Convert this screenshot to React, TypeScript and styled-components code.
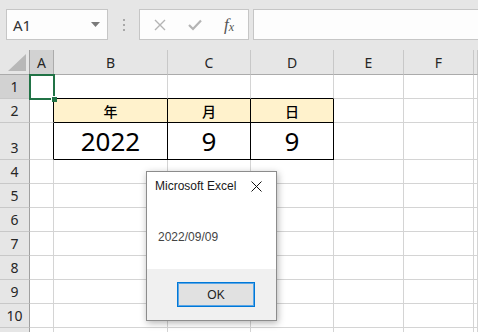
import styled, { createGlobalStyle } from 'styled-components'

const GlobalStyle = createGlobalStyle`
  html, body {
    margin: 0;
    padding: 0;
    overflow: hidden;
    background: #ffffff;
  }
  body {
    font-family: 'Noto Sans', 'Noto Sans CJK JP', sans-serif;
  }
`

const columns = ['A', 'B', 'C', 'D', 'E', 'F', 'G']
const rowHeights = [24, 24, 37, 24, 24, 24, 24, 24, 24, 24, 24]

const tableData: Record<string, string> = {
  B2: '年',
  C2: '月',
  D2: '日',
  B3: '2022',
  C3: '9',
  D3: '9',
}

const inTable = (col: string, row: number) =>
  ['B', 'C', 'D'].includes(col) && (row === 2 || row === 3)

const App = () => {
  return (
    <Window>
      <GlobalStyle />
      <Toolbar>
        <NameBox>
          <span>A1</span>
          <svg width="9" height="5" viewBox="0 0 9 5">
            <path d="M0 0 H9 L4.5 5 Z" fill="#7a7a7a" />
          </svg>
        </NameBox>
        <Grip>
          <i />
          <i />
          <i />
        </Grip>
        <FxButtons>
          <svg width="12" height="12" viewBox="0 0 12 12">
            <path d="M1 1 L11 11 M11 1 L1 11" stroke="#b4b4b4" strokeWidth="1.4" />
          </svg>
          <svg width="14" height="12" viewBox="0 0 14 12">
            <path d="M1 6 L5 10 L13 1.5" stroke="#b4b4b4" strokeWidth="2.2" fill="none" />
          </svg>
          <FxLabel>
            f<sub>x</sub>
          </FxLabel>
        </FxButtons>
        <FormulaInput />
      </Toolbar>

      <Sheet>
        <Corner>
          <svg width="18" height="17" viewBox="0 0 18 17">
            <path d="M18 0 V17 H0 Z" fill="#b8b8b8" />
          </svg>
        </Corner>
        {columns.map((c) => (
          <ColHeader key={c} $active={c === 'A'}>
            {c === 'G' ? '' : c}
          </ColHeader>
        ))}
        {rowHeights.map((_, i) => {
          const row = i + 1
          return [
            <RowHeader key={`h${row}`} $active={row === 1}>
              {row < rowHeights.length ? row : ''}
            </RowHeader>,
            ...columns.map((col) => {
              const id = `${col}${row}`
              const boxed = inTable(col, row)
              return (
                <Cell
                  key={id}
                  $selected={id === 'A1'}
                  $fill={boxed && row === 2}
                  $big={row === 3}
                  $darkRight={boxed || (col === 'A' && (row === 2 || row === 3))}
                  $darkBottom={boxed || (['B', 'C', 'D'].includes(col) && row === 1)}
                >
                  {tableData[id]}
                </Cell>
              )
            }),
          ]
        })}
      </Sheet>

      <Dialog>
        <DialogTitle>
          <span>Microsoft Excel</span>
          <svg width="11" height="11" viewBox="0 0 11 11">
            <path d="M0.5 0.5 L10.5 10.5 M10.5 0.5 L0.5 10.5" stroke="#111" strokeWidth="1" />
          </svg>
        </DialogTitle>
        <DialogBody>2022/09/09</DialogBody>
        <DialogFooter>
          <OkButton>OK</OkButton>
        </DialogFooter>
      </Dialog>
    </Window>
  )
}

const Window = styled.div`
  position: relative;
  width: 478px;
  height: 332px;
  overflow: hidden;
  background: #ffffff;
`

const Toolbar = styled.div`
  display: flex;
  align-items: flex-start;
  height: 50px;
  padding: 9px 0 0 6px;
  box-sizing: border-box;
  background: #e6e6e6;
`

const NameBox = styled.div`
  display: flex;
  align-items: center;
  justify-content: space-between;
  width: 102px;
  height: 31px;
  box-sizing: border-box;
  padding: 0 7px 0 6px;
  background: #fdfdfd;
  border: 1px solid #c6c6c6;
  font-family: 'Noto Sans', sans-serif;
  font-size: 15px;
  color: #333;
`

const Grip = styled.div`
  display: flex;
  flex-direction: column;
  gap: 3px;
  margin: 10px 14px 0 15px;

  i {
    display: block;
    width: 2px;
    height: 2px;
    background: #a8a8a8;
  }
`

const FxButtons = styled.div`
  display: flex;
  align-items: center;
  gap: 22px;
  width: 110px;
  height: 31px;
  box-sizing: border-box;
  padding-left: 14px;
  background: #fdfdfd;
  border: 1px solid #c6c6c6;
`

const FxLabel = styled.span`
  font-family: 'Liberation Serif', serif;
  font-style: italic;
  font-size: 17px;
  color: #555;

  sub {
    font-size: 12px;
    vertical-align: -1px;
  }
`

const FormulaInput = styled.div`
  flex: 1;
  height: 31px;
  margin-left: 4px;
  margin-right: -2px;
  box-sizing: border-box;
  background: #fdfdfd;
  border: 1px solid #c6c6c6;
`

const Sheet = styled.div`
  display: grid;
  grid-template-columns: 30px 24px 114px 83px 83px 70px 70px 1fr;
  grid-template-rows: 25px ${rowHeights.map((h) => `${h}px`).join(' ')};
`

const HeaderBase = styled.div`
  display: flex;
  justify-content: center;
  box-sizing: border-box;
  font-family: 'Noto Sans', sans-serif;
  font-size: 14px;
  color: #262626;
`

const Corner = styled(HeaderBase)`
  align-items: flex-end;
  justify-content: flex-end;
  padding: 0 3px 3px 0;
  background: #e6e6e6;
  border-right: 1px solid #a0a0a0;
  border-bottom: 1px solid #ababab;
`

const ColHeader = styled(HeaderBase)<{ $active?: boolean }>`
  align-items: center;
  background: ${(p) => (p.$active ? '#d2d2d2' : '#e6e6e6')};
  border-right: 1px solid ${(p) => (p.$active ? '#ababab' : '#c8c8c8')};
  border-bottom: 1px solid #ababab;
`

const RowHeader = styled(HeaderBase)<{ $active?: boolean }>`
  align-items: flex-end;
  padding-bottom: 2px;
  line-height: 19px;
  background: ${(p) => (p.$active ? '#d2d2d2' : '#e6e6e6')};
  border-right: 1px solid #a0a0a0;
  border-bottom: 1px solid #c8c8c8;
`

const Cell = styled.div<{
  $selected?: boolean
  $fill?: boolean
  $big?: boolean
  $darkRight?: boolean
  $darkBottom?: boolean
}>`
  position: relative;
  display: flex;
  align-items: center;
  justify-content: center;
  box-sizing: border-box;
  background: ${(p) => (p.$fill ? '#fff2cc' : '#ffffff')};
  border-right: 1px solid ${(p) => (p.$darkRight ? '#000' : '#d4d4d4')};
  border-bottom: 1px solid ${(p) => (p.$darkBottom ? '#000' : '#d4d4d4')};
  font-family: ${(p) => (p.$big ? "'Noto Sans', sans-serif" : "'Noto Sans CJK JP', sans-serif")};
  font-size: ${(p) => (p.$big ? '26px' : '14px')};
  font-weight: ${(p) => (p.$big ? 400 : 500)};
  color: #000;

  ${(p) =>
    p.$selected &&
    `
    &::before {
      content: '';
      position: absolute;
      left: -1px;
      top: -1px;
      width: 26px;
      height: 26px;
      box-sizing: border-box;
      border: 2px solid #217346;
      z-index: 1;
    }
    &::after {
      content: '';
      position: absolute;
      left: 21px;
      top: 21px;
      width: 5px;
      height: 5px;
      background: #217346;
      border: 1px solid #ffffff;
      border-width: 1px 0 0 1px;
      z-index: 2;
    }
  `}
`

const Dialog = styled.div`
  position: absolute;
  left: 146px;
  top: 171px;
  width: 131px;
  height: 150px;
  box-sizing: border-box;
  display: flex;
  flex-direction: column;
  background: #ffffff;
  border: 1px solid #8c8c8c;
  box-shadow: 1px 2px 7px rgba(0, 0, 0, 0.3);
  font-family: 'Liberation Sans', 'Noto Sans', sans-serif;
  font-size: 12px;
`

const DialogTitle = styled.div`
  display: flex;
  align-items: center;
  justify-content: space-between;
  height: 28px;
  padding: 0 14px 0 8px;
  color: #1a1a1a;
`

const DialogBody = styled.div`
  flex: 1;
  padding: 29px 0 0 11px;
  line-height: 16px;
  color: #444;
`

const DialogFooter = styled.div`
  display: flex;
  justify-content: flex-end;
  align-items: flex-start;
  height: 51px;
  box-sizing: border-box;
  padding: 13px 21px 0 0;
  background: #f0f0f0;
`

const OkButton = styled.button`
  width: 78px;
  height: 25px;
  padding: 0;
  background: #e1e1e1;
  border: 1px solid #0078d7;
  box-shadow: inset 0 0 0 1px #5aa6e6;
  font-family: 'Liberation Sans', 'Noto Sans', sans-serif;
  font-size: 12px;
  color: #222;
`

export default App
